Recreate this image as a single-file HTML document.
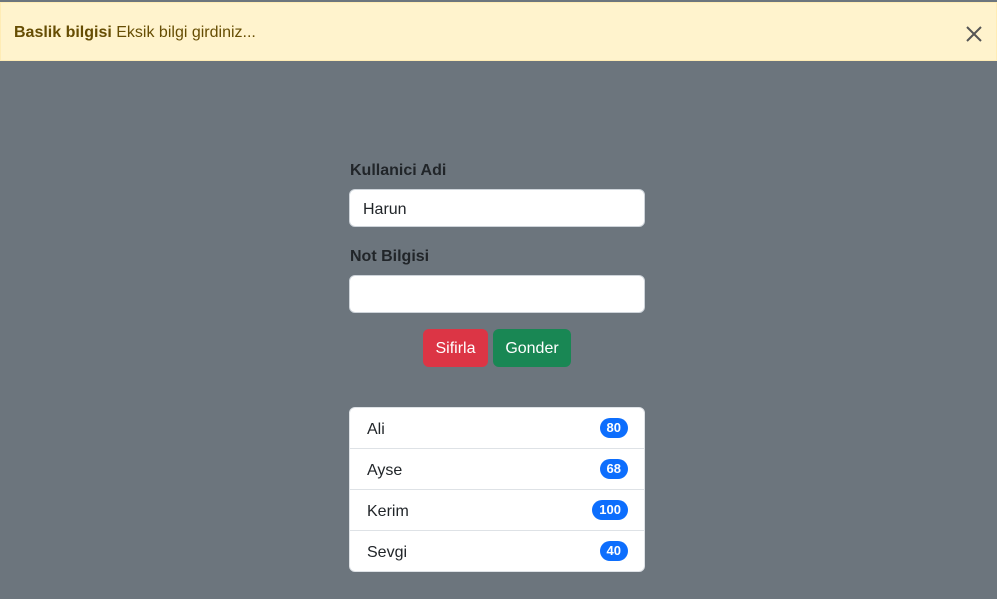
<!DOCTYPE html>
<html><head><style>
body{margin:0;width:997px;height:599px;background:#6c757d;font-family:"Liberation Sans",sans-serif;font-size:16px;position:relative;overflow:hidden}
.alert{position:absolute;left:0;top:2px;width:995px;height:57px;background:#fff3cd;border:1px solid #ffecb5;color:#664d03}
.alert span{position:absolute;left:13px;top:21px;font-size:16px}
.x{position:absolute;left:964px;top:22px}
label{position:absolute;left:350px;font-weight:bold;color:#212529;font-size:16px}
.in{position:absolute;left:349px;width:294px;height:36px;background:#fff;border:1px solid #ced4da;border-radius:6px}
.in span{position:absolute;left:13px;top:11px;color:#212529}
.btn{position:absolute;top:329px;height:38px;border-radius:6px;color:#fff;line-height:40px;text-align:center}
.list{position:absolute;left:349px;top:407px;width:294px;height:163px;background:#fff;border:1px solid #dee2e6;border-radius:6px;overflow:hidden}
.row{height:40px;border-bottom:1px solid #dee2e6;position:relative;color:#212529}
.row:last-child{border-bottom:none}
.row span{position:absolute;left:17px;top:13px}
.b{position:absolute;right:16px;top:10px;background:#0d6efd;color:#fff;font-weight:bold;font-size:13px;border-radius:10px;padding:3px 7px;line-height:14px}
</style></head><body>
<div class="alert"><span><b>Baslik bilgisi</b> Eksik bilgi girdiniz...</span>
<svg class="x" width="18" height="18" viewBox="0 0 18 18"><path d="M2 2L16 16M16 2L2 16" stroke="#555" stroke-width="2"/></svg></div>
<label style="top:162px">Kullanici Adi</label>
<div class="in" style="top:189px"><span>Harun</span></div>
<label style="top:248px">Not Bilgisi</label>
<div class="in" style="top:275px"></div>
<div class="btn" style="left:423px;width:65px;background:#dc3545">Sifirla</div>
<div class="btn" style="left:493px;width:78px;background:#198754">Gonder</div>
<div class="list">
<div class="row"><span>Ali</span><div class="b">80</div></div>
<div class="row"><span>Ayse</span><div class="b">68</div></div>
<div class="row"><span>Kerim</span><div class="b">100</div></div>
<div class="row"><span>Sevgi</span><div class="b">40</div></div>
</div>
</body></html>
